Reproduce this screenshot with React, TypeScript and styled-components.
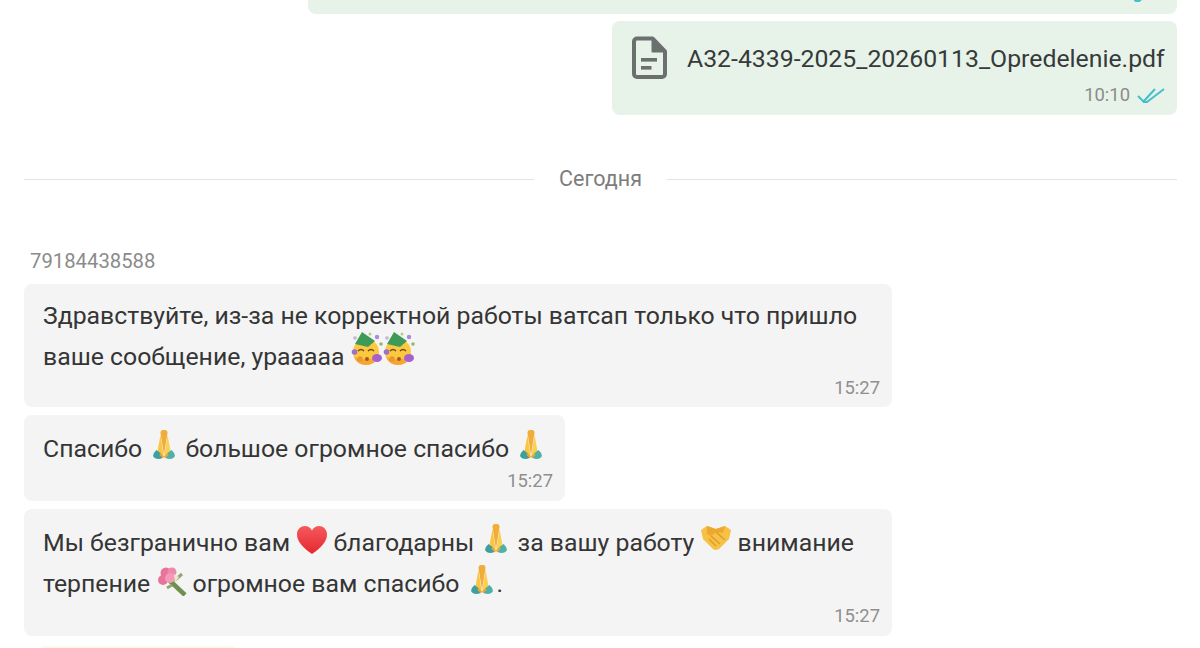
import React from "react";
import styled, { createGlobalStyle } from "styled-components";

const Global = createGlobalStyle`
  html, body { margin: 0; padding: 0; background: #fff; }
  body { font-family: Roboto, "Liberation Sans", sans-serif; overflow: hidden; }
`;

const Page = styled.div`
  width: 1200px;
  height: 648px;
  overflow: hidden;
  display: flex;
  flex-direction: column;
  box-sizing: border-box;
  padding: 0 23px 0 24px;
  color: #333;
`;

const OutRow = styled.div<{ $gap: number }>`
  display: flex;
  justify-content: flex-end;
  margin-bottom: ${(p) => p.$gap}px;
`;

const ClippedOutBubble = styled.div`
  width: 869px;
  height: 14px;
  overflow: hidden;
  display: flex;
  justify-content: flex-end;
  align-items: flex-end;
  box-sizing: border-box;
  padding: 0 20px 11px 0;
  background: #e7f3e8;
  border-radius: 0 0 8px 8px;
`;

const OutBubble = styled.div`
  width: 565px;
  height: 94px;
  box-sizing: border-box;
  background: #e7f3e8;
  border-radius: 8px;
  padding: 13px 12px 0 20px;
  display: flex;
  flex-direction: column;
`;

const FileRow = styled.div`
  display: flex;
  align-items: center;
  gap: 19px;
  height: 48px;
`;

const FileName = styled.span`
  font-size: 24.8px;
  color: #363a3a;
  white-space: nowrap;
`;

const Meta = styled.div`
  display: flex;
  justify-content: flex-end;
  align-items: center;
  gap: 7px;
  font-size: 18.4px;
  color: #8a8d8c;
  line-height: 22px;
  margin-top: 2px;
`;

const Divider = styled.div`
  display: flex;
  align-items: center;
  gap: 25px;
  margin: 51px 0 60px;
  height: 24px;
  font-size: 21.5px;
  color: #7d7d7d;
  &::before, &::after {
    content: "";
    flex: 1;
    height: 1px;
    margin-top: 2px;
    background: #e2e4e3;
  }
`;

const Sender = styled.div`
  font-size: 20.3px;
  line-height: 24px;
  color: #8b8b8b;
  padding-left: 6px;
  margin-bottom: 11px;
  margin-top: -1px;
`;

const InBubble = styled.div<{ $width: number; $height: number; $top: number }>`
  width: ${(p) => p.$width}px;
  height: ${(p) => p.$height}px;
  box-sizing: border-box;
  background: #f4f4f4;
  border-radius: 8px;
  padding: ${(p) => p.$top}px 12px 0 19px;
  margin-bottom: 8px;
  flex: none;
  display: flex;
  flex-direction: column;
`;

const MsgText = styled.div`
  font-size: 24.8px;
  line-height: 41px;
  color: #353535;
  white-space: nowrap;
`;

const Time = styled.div`
  font-size: 18.4px;
  line-height: 22px;
  color: #8f8f8f;
  text-align: right;
  margin-top: auto;
  margin-bottom: 9px;
`;

const NextBubbleEdge = styled.div`
  width: 196px;
  height: 4px;
  flex: none;
  margin: 2px 0 0 16px;
  background: #fdf6ea;
  border-radius: 6px 6px 0 0;
`;

const Emoji = styled.svg<{ $w: number; $h: number; $ml?: number; $mr?: number; $up: number }>`
  display: inline-block;
  width: ${(p) => p.$w}px;
  height: ${(p) => p.$h}px;
  margin: -12px ${(p) => p.$mr ?? 0}px -12px ${(p) => p.$ml ?? 0}px;
  vertical-align: ${(p) => p.$up + 12}px;
`;

const DocIcon = () => (
  <svg width="36" height="44" viewBox="0 0 36 44" fill="none">
    <path d="M5 2.500h15.500L33 15.500V38a3 3 0 0 1-3 3H5a3 3 0 0 1-3-3V5.500a3 3 0 0 1 3-3z" stroke="#6b706e" strokeWidth="4" strokeLinejoin="round" />
    <path d="M20.500 2.500L33 15.500H20.500z" fill="#6b706e" stroke="#6b706e" strokeWidth="2" strokeLinejoin="round" />
    <rect x="9" y="22" width="16" height="3.600" fill="#6b706e" />
    <rect x="9" y="30" width="10.500" height="3.600" fill="#6b706e" />
  </svg>
);

const DoubleCheck = () => (
  <svg width="28" height="18" viewBox="0 0 28 18" fill="none" stroke="#45bfca" strokeWidth="2">
    <path d="M1 10l6 6" />
    <path d="M6 16L18 3" />
    <path d="M10 16L27 3" />
    <path d="M6 16h5" />
  </svg>
);

const Party = (p: { ml?: number; mr?: number }) => (
  <Emoji $w={32} $h={34} $ml={p.ml} $mr={p.mr} $up={-1} viewBox="0 0 32 34">
    <circle cx="15" cy="20" r="13" fill="#fbc83f" />
    <path d="M3 25a13 13 0 0 0 24 0q-12 5-24 0z" fill="#f6a733" />
    <path d="M4 12L11 0l13 9-7 6z" fill="#3f9a58" />
    <circle cx="26" cy="5" r="2.200" fill="#a98bd6" />
    <circle cx="4" cy="6" r="1.800" fill="#c4b3dc" />
    <circle cx="30" cy="12" r="1.800" fill="#9fb46a" />
    <circle cx="19" cy="2" r="1.500" fill="#b7c98a" />
    <path d="M7 19q3-3 6 0M17 19q3-3 6 0" stroke="#6e4a1c" strokeWidth="1.500" fill="none" />
    <ellipse cx="26" cy="26" rx="5" ry="4" fill="#a65fd0" />
    <circle cx="3.500" cy="20" r="2.800" fill="#9a6fd0" />
    <circle cx="16" cy="27" r="2" fill="#a8561f" />
    <circle cx="9" cy="27" r="2.800" fill="#f09338" />
  </Emoji>
);

const Pray = (p: { ml?: number; mr?: number }) => (
  <Emoji $w={26} $h={31} $ml={p.ml ?? 3} $mr={p.mr ?? 2} $up={-3} viewBox="0 0 26 31">
    <path d="M13 26L9.500 4q0-3 2.500-3h2q2.500 0 2.500 3L13 26z" fill="#f2ac3a" />
    <path d="M12.600 27L9.500 6 6.500 22q2 4 6.100 5z" fill="#f9c642" />
    <path d="M13.400 27l3.100-21 3 16q-2 4-6.100 5z" fill="#fad04f" />
    <path d="M2 27q0-3 3.500-6 3.500 2 6.500 6.500-1 2.500-4.500 2.500-4 0-5.500-3z" fill="#3e9ea0" />
    <path d="M24 27q0-3-3.500-6-3.500 2-6.500 6.500 1 2.500 4.500 2.500 4 0 5.500-3z" fill="#4fb0a8" />
    <path d="M9 25l3.500 3.500M17 25l-3.500 3.500" stroke="#f0a52f" strokeWidth="2" />
  </Emoji>
);

const Heart = (p: { ml?: number; mr?: number }) => (
  <Emoji $w={32} $h={30} $ml={p.ml} $mr={p.mr} $up={-4} viewBox="0 0 32 30">
    <defs>
      <linearGradient id="hg" x1="0" y1="0" x2="0" y2="1">
        <stop offset="0" stopColor="#f45a5c" />
        <stop offset="1" stopColor="#e5272f" />
      </linearGradient>
    </defs>
    <path d="M16 29C6 22 1 16 1 9.500 1 4 5 1 9 1c3 0 5.500 1.500 7 4.500C17.500 2.500 20 1 23 1c4 0 8 3 8 8.500C31 16 26 22 16 29z" fill="url(#hg)" />
  </Emoji>
);

const Shake = (p: { ml?: number; mr?: number }) => (
  <Emoji $w={32} $h={25} $ml={p.ml} $mr={p.mr} $up={1} viewBox="0 0 32 25">
    <path d="M1 5l6-4 9 3 9-3 6 4-2 9-10 10q-3 2-6 0L3 14z" fill="#f6c145" />
    <path d="M7 1l9 3 9-3-2 7-7-1-5 4-4-2z" fill="#eda92f" />
    <path d="M11 11l9 8M9 14l7 7M16 7l9 8" stroke="#dc9a2a" strokeWidth="1.300" fill="none" />
  </Emoji>
);

const Bouquet = (p: { ml?: number; mr?: number }) => (
  <Emoji $w={30} $h={30} $ml={p.ml} $mr={p.mr} $up={-4} viewBox="0 0 30 30">
    <path d="M12 14l16 15" stroke="#6f8f4e" strokeWidth="4.500" />
    <path d="M17 15l8-7M15 19l-5 3" stroke="#8bab6a" strokeWidth="3" />
    <circle cx="9" cy="7" r="5.500" fill="#e9749a" />
    <circle cx="15" cy="6" r="4.500" fill="#ee8aab" />
    <circle cx="6" cy="14" r="5" fill="#e9749a" />
    <circle cx="13" cy="12" r="5" fill="#f39ab6" />
    <path d="M17 8l5 3-4 6z" fill="#efe3d0" />
  </Emoji>
);

export default function App() {
  return (
    <Page>
      <Global />
      <OutRow $gap={7}>
        <ClippedOutBubble>
          <DoubleCheck />
        </ClippedOutBubble>
      </OutRow>
      <OutRow $gap={0}>
        <OutBubble>
          <FileRow>
            <DocIcon />
            <FileName>А32-4339-2025_20260113_Opredelenie.pdf</FileName>
          </FileRow>
          <Meta>
            10:10
            <DoubleCheck />
          </Meta>
        </OutBubble>
      </OutRow>
      <Divider>Сегодня</Divider>
      <Sender>79184438588</Sender>
      <InBubble $width={868} $height={123} $top={11}>
        <MsgText>
          Здравствуйте, из-за не корректной работы ватсап только что пришло
          <br />
          ваше сообщение, урааааа <Party />
          <Party />
        </MsgText>
        <Time>15:27</Time>
      </InBubble>
      <InBubble $width={541} $height={86} $top={13}>
        <MsgText>
          Спасибо <Pray /> большое огромное спасибо <Pray />
        </MsgText>
        <Time>15:27</Time>
      </InBubble>
      <InBubble $width={868} $height={127} $top={13}>
        <MsgText>
          Мы безгранично вам <Heart mr={-1} /> благодарны <Pray /> за вашу работу <Shake mr={-1} /> внимание
          <br />
          терпение <Bouquet ml={1} mr={-1} /> огромное вам спасибо <Pray />.
        </MsgText>
        <Time>15:27</Time>
      </InBubble>
      <NextBubbleEdge />
    </Page>
  );
}
